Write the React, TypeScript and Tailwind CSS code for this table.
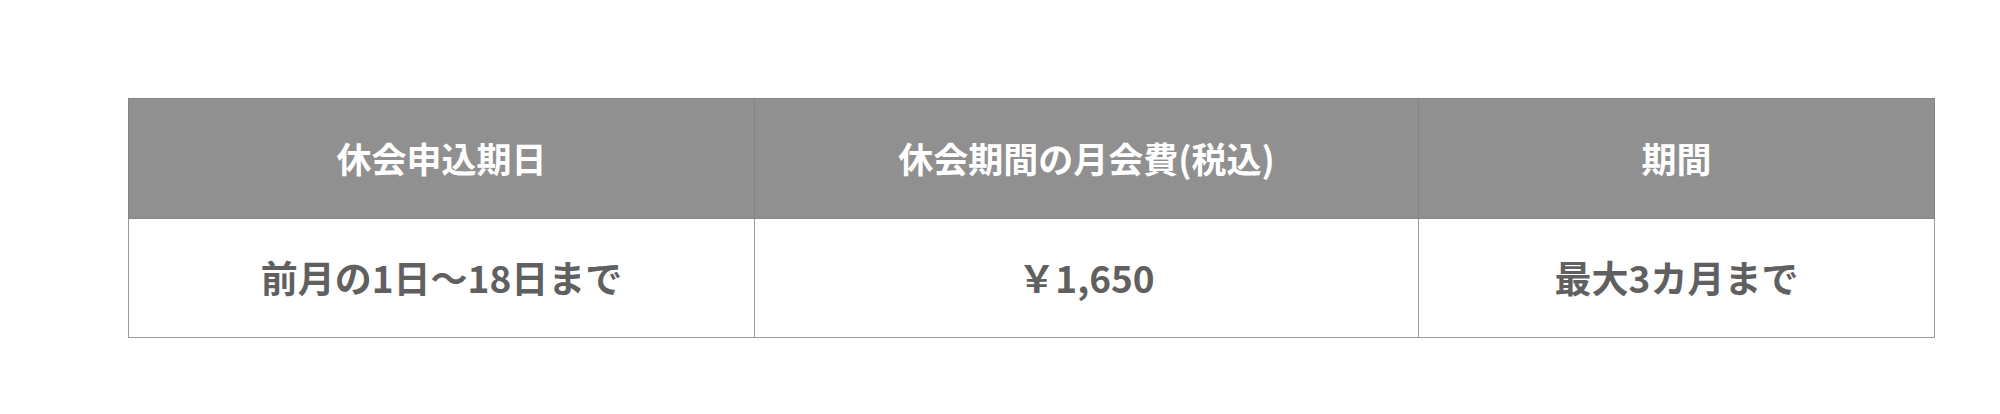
const headers = ["休会申込期日", "休会期間の月会費(税込)", "期間"];
const values = ["前月の1日〜18日まで", "￥1,650", "最大3カ月まで"];

export default function App() {
  return (
    <div
      className="w-[2000px] h-[414px] bg-white pt-[98px] pl-[128px]"
      style={{ fontFamily: '"Noto Sans CJK JP", "Noto Sans", sans-serif' }}
    >
      <table className="w-[1806px] table-fixed border-collapse">
        <colgroup>
          <col className="w-[626px]" />
          <col className="w-[664px]" />
          <col className="w-[516px]" />
        </colgroup>
        <thead>
          <tr>
            {headers.map((h) => (
              <th
                key={h}
                className="h-[120px] border border-[#858585] bg-[#909090] text-center align-middle text-[35px] font-bold text-white"
              >
                {h}
              </th>
            ))}
          </tr>
        </thead>
        <tbody>
          <tr>
            {values.map((v) => (
              <td
                key={v}
                className="h-[119px] border border-[#9a9a9a] bg-white text-center align-middle text-[37px] font-bold text-[#606060]"
              >
                {v}
              </td>
            ))}
          </tr>
        </tbody>
      </table>
    </div>
  );
}
